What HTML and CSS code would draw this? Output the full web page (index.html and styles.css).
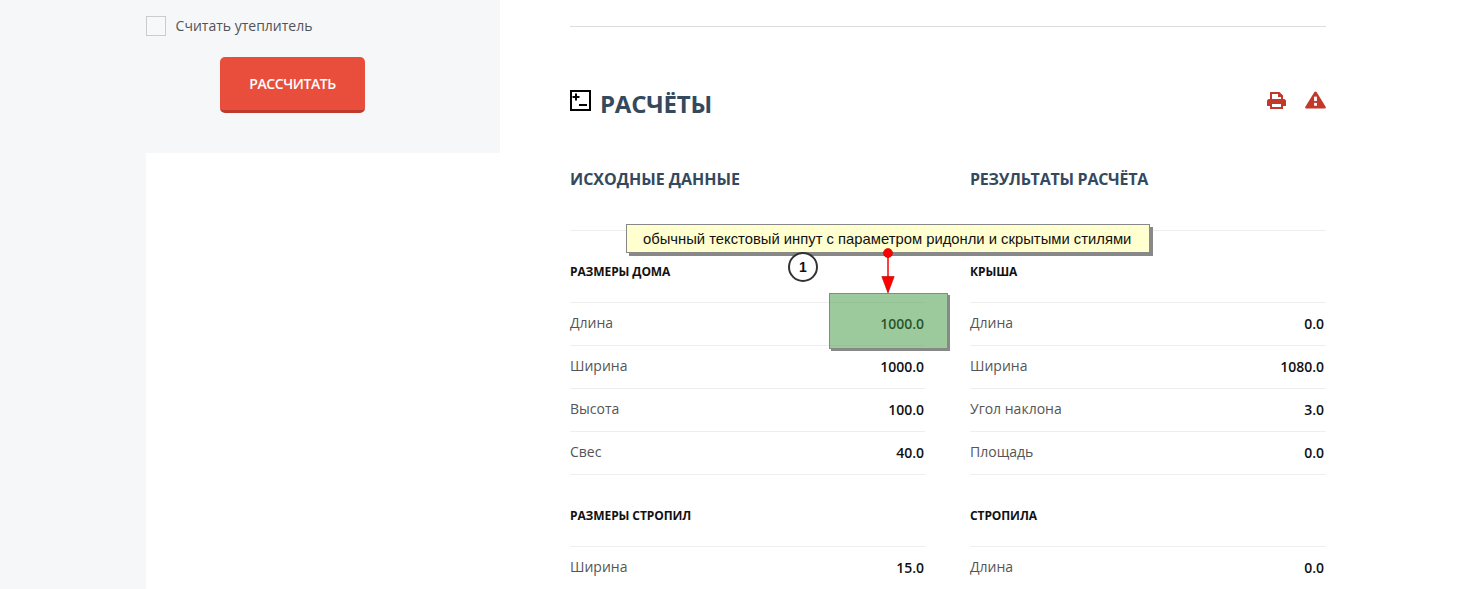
FILE: index.html
```html
<!DOCTYPE html>
<html lang="ru">
<head>
    <meta charset="UTF-8">
    <title>Расчёты</title>
    <link rel="stylesheet" href="styles.css">
</head>
<body>
<div class="page">
    <!-- Left column -->
    <aside class="sidebar">
        <div class="sidebar-panel">
            <label class="check-row">
                <span class="checkbox"></span>
                <span>Считать утеплитель</span>
            </label>
            <div class="btn-row">
                <button class="calc-btn">РАССЧИТАТЬ</button>
            </div>
        </div>
    </aside>

    <!-- Main -->
    <main class="content">
        <div class="top-line"></div>
        <div class="title-row">
            <h1 class="title">
                <svg class="title-icon" width="21" height="21" viewBox="0 0 21 21">
                    <rect x="1" y="1" width="19" height="19" fill="#fff" stroke="#000" stroke-width="2"/>
                    <path d="M2.500 7h7M6 3.500v7M9 15h8" stroke="#000" stroke-width="2" fill="none"/>
                </svg>
                РАСЧЁТЫ
            </h1>
            <div class="title-icons">
                <svg width="19" height="17" viewBox="0 0 19 17">
                    <path fill="#c0392b" fill-rule="evenodd" d="M3 7V0h9.500L16 3.500V7h-2V5h-3V2H5v5zM2 7h15c1 0 2 1 2 2v5h-3v3H3v-3H0V9c0-1 1-2 2-2zM5 12v3h9v-3z"/>
                </svg>
                <svg width="21" height="18" viewBox="0 0 22 18">
                    <path fill="#c0392b" d="M11 0c.6 0 1 .3 1.300.8l9.300 15.400c.5.9-.1 1.800-1 1.800H1.400c-.9 0-1.500-.9-1-1.800L9.700.8C10 .3 10.400 0 11 0z"/>
                    <rect x="9.500" y="5.500" width="3" height="4.500" fill="#fff"/>
                    <rect x="9.500" y="12" width="3" height="3" fill="#fff"/>
                </svg>
            </div>
        </div>

        <div class="columns">
            <section class="col">
                <h2 class="col-title">ИСХОДНЫЕ ДАННЫЕ</h2>
                <div class="col-line"></div>
                <h3 class="group-title">РАЗМЕРЫ ДОМА</h3>
                <div class="row"><span>Длина</span><b>1000.0</b></div>
                <div class="row"><span>Ширина</span><b>1000.0</b></div>
                <div class="row"><span>Высота</span><b>100.0</b></div>
                <div class="row"><span>Свес</span><b>40.0</b></div>
                <h3 class="group-title">РАЗМЕРЫ СТРОПИЛ</h3>
                <div class="row"><span>Ширина</span><b>15.0</b></div>
            </section>
            <section class="col col-result">
                <h2 class="col-title">РЕЗУЛЬТАТЫ РАСЧЁТА</h2>
                <div class="col-line"></div>
                <h3 class="group-title">КРЫША</h3>
                <div class="row"><span>Длина</span><b>0.0</b></div>
                <div class="row"><span>Ширина</span><b>1080.0</b></div>
                <div class="row"><span>Угол наклона</span><b>3.0</b></div>
                <div class="row"><span>Площадь</span><b>0.0</b></div>
                <h3 class="group-title">СТРОПИЛА</h3>
                <div class="row"><span>Длина</span><b>0.0</b></div>
            </section>
        </div>
    </main>
</div>

<!-- Annotation layer -->
<div class="note">обычный текстовый инпут с параметром ридонли и скрытыми стилями</div>
<div class="badge">1</div>
<div class="highlight"></div>
<svg class="arrow" width="16" height="46" viewBox="0 0 16 46">
    <path d="M8 5v26" stroke="#f00" stroke-width="1.500"/>
    <circle cx="8" cy="5" r="4.500" fill="#f00" stroke="#c00000" stroke-width=".6"/>
    <path d="M1.800 28.500h12.400L8 45z" fill="#f00" stroke="#b00000" stroke-width=".6"/>
</svg>
</body>
</html>
```

FILE: styles.css
```css
html, body {
    margin: 0;
    padding: 0;
    background: #fff;
    height: 589px;
    overflow: hidden;
}

body {
    font-family: "Open Sans", sans-serif;
    color: #555;
    position: relative;
}

.page {
    display: flex;
    height: 589px;
    background: linear-gradient(to right, #f6f7f9 146px, #fff 146px);
}

.sidebar {
    margin-left: 146px;
    width: 354px;
}

.sidebar-panel {
    background: #f6f7f9;
    height: 153px;
    padding-top: 16px;
    box-sizing: border-box;
}

.check-row {
    display: flex;
    align-items: flex-start;
    gap: 9.600px;
    font-size: 14px;
    line-height: 19px;
    color: #4f5458;
}

.checkbox {
    width: 18px;
    height: 18px;
    border: 1px solid #ccc;
    background: #f7f8f9;
}

.btn-row {
    margin-top: 21px;
    padding-left: 74px;
}

.calc-btn {
    width: 145px;
    height: 56px;
    background: #e94e3d;
    border: none;
    border-bottom: 3px solid #c0392b;
    border-radius: 5px;
    color: #fff;
    font-family: "Open Sans", sans-serif;
    font-size: 14px;
    font-weight: 600;
    letter-spacing: -.4px;
}

.content {
    margin-left: 70px;
    width: 756px;
}

.top-line {
    margin-top: 26px;
    border-top: 1px solid #ddd;
}

.title-row {
    display: flex;
    justify-content: space-between;
    margin-top: 62px;
    height: 32px;
}

.title {
    display: flex;
    align-items: flex-start;
    gap: 9px;
    margin: 0;
    font-size: 24px;
    line-height: 30px;
    font-weight: 700;
    letter-spacing: -.2px;
    color: #34495e;
}

.title-icon {
    margin-top: 1px;
}

.title-icons {
    display: flex;
    gap: 19px;
    align-items: center;
    height: 18px;
    padding-top: 2px;
}

.columns {
    display: flex;
    gap: 45px;
}

.col {
    width: 355px;
}

.col-result {
    width: 356px;
}

.col-title {
    margin: 45px 0 0;
    font-size: 16px;
    line-height: 26px;
    font-weight: 700;
    color: #34495e;
}

.col-result .col-title {
    letter-spacing: -.25px;
}

.col-line {
    margin-top: 38px;
    border-top: 1px solid #eee;
}

.group-title {
    margin: 0;
    padding-top: 33px;
    height: 38px;
    font-size: 12px;
    line-height: 16px;
    font-weight: 700;
    letter-spacing: -.1px;
    color: #111;
    border-bottom: 1px solid #eee;
}

.row {
    display: flex;
    justify-content: space-between;
    align-items: center;
    box-sizing: border-box;
    height: 43px;
    padding-bottom: 4px;
    border-bottom: 1px solid #eee;
    font-size: 14px;
    color: #555;
}

.row b {
    margin: 2px 1px 0 0;
    font-weight: 600;
    color: #111;
}

.col-result .row b {
    margin-right: 2px;
}

.note {
    position: absolute;
    left: 626px;
    top: 224px;
    width: 524px;
    height: 29px;
    box-sizing: border-box;
    background: #ffffd0;
    border: 1px solid #888;
    box-shadow: 3px 3px 0 #888;
    font-family: "Liberation Sans", Arial, sans-serif;
    font-size: 14.800px;
    line-height: 28px;
    padding-left: 16px;
    color: #111;
}

.badge {
    position: absolute;
    left: 788px;
    top: 252px;
    width: 30px;
    height: 30px;
    box-sizing: border-box;
    border: 2px solid #333;
    border-radius: 50%;
    background: #fff;
    font-family: "Liberation Sans", Arial, sans-serif;
    font-size: 14px;
    font-weight: 700;
    line-height: 26px;
    text-align: center;
    color: #111;
}

.highlight {
    position: absolute;
    left: 829px;
    top: 293px;
    width: 119px;
    height: 56px;
    box-sizing: border-box;
    background: rgba(60, 150, 60, .5);
    border: 1px solid #888;
    box-shadow: 2px 2px 0 #888;
}

.arrow {
    position: absolute;
    left: 880px;
    top: 248px;
}
```
